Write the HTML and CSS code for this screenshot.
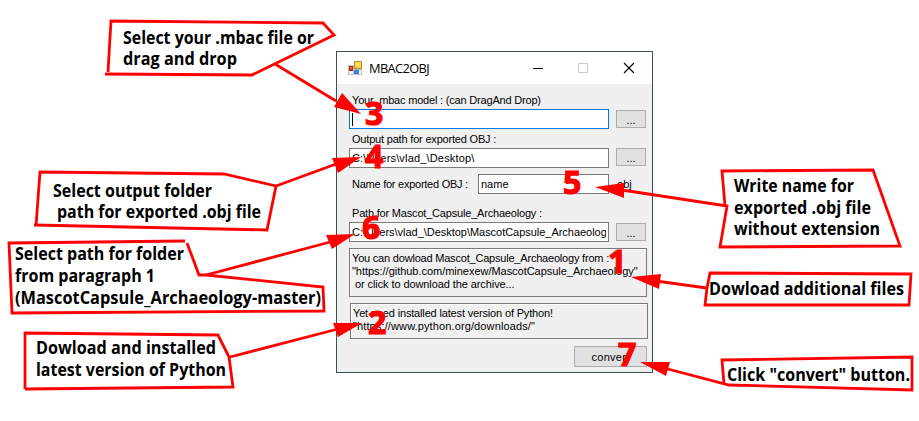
FILE: index.html
```html
<!DOCTYPE html>
<html lang="en">
<head>
<meta charset="utf-8">
<title>MBAC2OBJ</title>
<link rel="stylesheet" href="styles.css">
</head>
<body>
<main class="guide">
  <section class="window">
    <header class="titlebar">
      <svg class="app-icon" width="14" height="14" viewBox="0 0 14 14">
        <path d="M.5 4.5h5v9h-5z" fill="#f0f0f0" stroke="#c4c4c4"/>
        <path d="M5.5 8.5h8v5h-8z" fill="#f4f6fa" stroke="#b8bdc8"/>
        <path d="M6.5 .5h7v7h-7z" fill="#ffd044" stroke="#c08a1c"/>
        <path d="M8 2h3v3H8z" fill="#ffe88c"/>
        <path d="M1 5h4v5H1z" fill="#b92813"/>
        <path d="M2 6h2v2H2z" fill="#dc6a50"/>
        <path d="M6 9h5v4H6z" fill="#3f7fdc"/>
      </svg>
      <h1 class="title">MBAC2OBJ</h1>
      <svg class="controls" width="104" height="12" viewBox="0 0 104 12">
        <path d="M1 6.5h10" stroke="#000"/>
        <path d="M46.5 1.5h9v9h-9z" fill="none" stroke="#ccc"/>
        <path d="M92 1l10 10M102 1l-10 10" stroke="#000" stroke-width="1.1"/>
      </svg>
    </header>
    <form class="form">
      <label class="label label-model">Your .mbac model : (can DragAnd Drop)</label>
      <div class="row">
        <div class="field focused"><i class="caret"></i></div>
        <button type="button" class="browse">...</button>
      </div>
      <label class="label label-output">Output path for exported OBJ :</label>
      <div class="row">
        <div class="field"><span class="path">C:\Users\vlad_\Desktop\</span></div>
        <button type="button" class="browse raised">...</button>
      </div>
      <div class="row name-row">
        <label class="label label-name">Name for exported OBJ :</label>
        <div class="field name-field">name</div>
        <span class="suffix">.obj</span>
      </div>
      <label class="label label-capsule">Path for Mascot_Capsule_Archaeology :</label>
      <div class="row">
        <div class="field"><span class="long-path">C:\Users\vlad_\Desktop\MascotCapsule_Archaeology</span></div>
        <button type="button" class="browse">...</button>
      </div>
      <div class="panel download">
        <p class="line-a">You can dowload Mascot_Capsule_Archaeology from :</p>
        <p class="line-b">"https://github.com/minexew/MascotCapsule_Archaeology"</p>
        <p class="line-c">or click to download the archive...</p>
      </div>
      <div class="panel python">
        <p class="line-d">Yet need installed latest version of Python!</p>
        <p class="line-e">"https://www.python.org/downloads/"</p>
      </div>
      <button type="button" class="convert">convert</button>
    </form>
  </section>

  <svg class="notes" width="919" height="421" viewBox="0 0 919 421">
    <g class="stroke">
      <path d="M108 72L111 21L323 23L334 35L252 75L105 74M275 64L336 101"/>
      <path d="M36 226L40 172L224 174L276 186L267 230L34 225M276 186L336 164"/>
      <path d="M185 241L9 243L12 313L324 311L323 287L206 275H199L187 243M206 275L334 241"/>
      <path d="M25 389L25 333L218 335L229 357L233 387L25 389M230 357L338 329"/>
      <path d="M725 206L722 171L873 170L900 246L720 247L727 206L622 190"/>
      <path d="M707 288L710 273L911 274L909 305L705 305L707 288L656 281"/>
      <path d="M724 384L722 360L912 357V390L729 385L664 368"/>
    </g>
    <g class="arrows">
      <path d="M361 114L342 93L334 107Z"/>
      <path d="M361 157L332 158L338 173Z"/>
      <path d="M355 234L326 235L332 249Z"/>
      <path d="M362 323L333 323L338 337Z"/>
      <path d="M595 187L624 183L624 198Z"/>
      <path d="M631 277L661 274L659 289Z"/>
      <path d="M640 362L670 362L666 376Z"/>
    </g>
    <g class="caption">
      <text x="123" y="44" textLength="191" lengthAdjust="spacingAndGlyphs">Select your .mbac file or</text>
      <text x="123" y="65" textLength="114" lengthAdjust="spacingAndGlyphs">drag and drop</text>
      <text x="53" y="197" textLength="159" lengthAdjust="spacingAndGlyphs">Select output folder</text>
      <text x="57" y="218" textLength="204" lengthAdjust="spacingAndGlyphs">path for exported .obj file</text>
      <text x="15" y="260" textLength="169" lengthAdjust="spacingAndGlyphs">Select path for folder</text>
      <text x="15" y="282" textLength="140" lengthAdjust="spacingAndGlyphs">from paragraph 1</text>
      <text x="15" y="304" textLength="306" lengthAdjust="spacingAndGlyphs">(MascotCapsule_Archaeology-master)</text>
      <text x="36" y="354" textLength="180" lengthAdjust="spacingAndGlyphs">Dowload and installed</text>
      <text x="36" y="376" textLength="190" lengthAdjust="spacingAndGlyphs">latest version of Python</text>
      <text x="734" y="192" textLength="120" lengthAdjust="spacingAndGlyphs">Write name for</text>
      <text x="734" y="214" textLength="137" lengthAdjust="spacingAndGlyphs">exported .obj file</text>
      <text x="734" y="235" textLength="146" lengthAdjust="spacingAndGlyphs">without extension</text>
      <text x="709" y="295" textLength="195" lengthAdjust="spacingAndGlyphs">Dowload additional files</text>
      <text x="727" y="381" textLength="183" lengthAdjust="spacingAndGlyphs">Click "convert" button.</text>
    </g>
    <g class="number">
      <text x="365" y="125">3</text>
      <text x="365" y="168">4</text>
      <text x="563" y="194">5</text>
      <text x="362" y="239">6</text>
      <text x="608" y="273">1</text>
      <text x="368" y="334">2</text>
      <text x="618" y="366">7</text>
    </g>
  </svg>
</main>
</body>
</html>
```
FILE: styles.css
```css
* { box-sizing: border-box; }
body { margin: 0; background: #fff; overflow: hidden; }
.guide { position: relative; width: 919px; height: 421px; padding: 51px 0 0 336px; }
.window {
  width: 317px; height: 322px;
  border: 1px solid #3f5054;
  background: #f0f0f0;
  font: 11px/13px "Liberation Sans", Arial, sans-serif;
  color: #000;
}
.titlebar { display: flex; align-items: center; height: 32px; padding: 0 16px 0 11px; background: #fff; }
.title { margin: 0 auto 0 7px; font: 12.8px/20px "Open Sans", "Noto Sans", sans-serif; font-weight: 400; letter-spacing: -.6px; }
.form { display: flex; flex-direction: column; padding: 10px 4px 0 12px; }
.label { height: 15px; padding-left: 3px; white-space: nowrap; letter-spacing: -.19px; }
.row { display: flex; gap: 7px; height: 20px; align-items: center; }
.field {
  width: 260px; height: 20px; padding: 3px 2px;
  border: 1px solid #7a7a7a; background: #fff;
  overflow: hidden; white-space: nowrap;
}
.focused { border-color: #0078d7; }
.caret { display: block; width: 1px; height: 13px; background: #000; }
.path { letter-spacing: .17px; }
.long-path { display: block; overflow: hidden; letter-spacing: -.03px; }
.browse, .convert {
  width: 30px; height: 18px; margin: 0; padding: 0;
  border: 1px solid #adadad; background: #e1e1e1;
  font: inherit; line-height: 18px; color: #000;
}
.raised { margin-bottom: 2px; }
.label-output { height: 19px; padding-top: 4px; }
.name-row { gap: 0; margin-top: 6px; }
.label-name { width: 129px; height: 13px; letter-spacing: -.25px; }
.name-field { width: 131px; }
.suffix { margin-left: 5px; }
.label-capsule { height: 28px; padding-top: 13px; }
.panel { border: 1px solid #7a7a7a; box-shadow: inset 1px 1px #fff; white-space: nowrap; }
.panel p { margin: 0; }
.download { width: 298px; height: 49px; margin-top: 6px; padding: 3px 2px; }
.python { width: 298px; height: 36px; margin: 6px 0 0 1px; padding: 3px 2px; }
.line-a { letter-spacing: -.2px; }
.line-b { letter-spacing: -.03px; }
.line-c { padding-left: 3px; letter-spacing: -.09px; }
.line-d { letter-spacing: -.16px; }
.line-e { letter-spacing: .12px; }
.convert { width: 73px; height: 21px; margin: 7px 0 0 225px; letter-spacing: .25px; }
.notes { position: absolute; left: 0; top: 0; }
.stroke { fill: none; stroke: #f00; stroke-width: 2.8; }
.arrows { fill: #f00; }
.caption { font: 700 17px "Open Sans", "Noto Sans", sans-serif; fill: #000; }
.number { font: 700 32px "Open Sans", "Noto Sans", sans-serif; fill: #f00; stroke: #f00; stroke-width: 1.2; }
```
